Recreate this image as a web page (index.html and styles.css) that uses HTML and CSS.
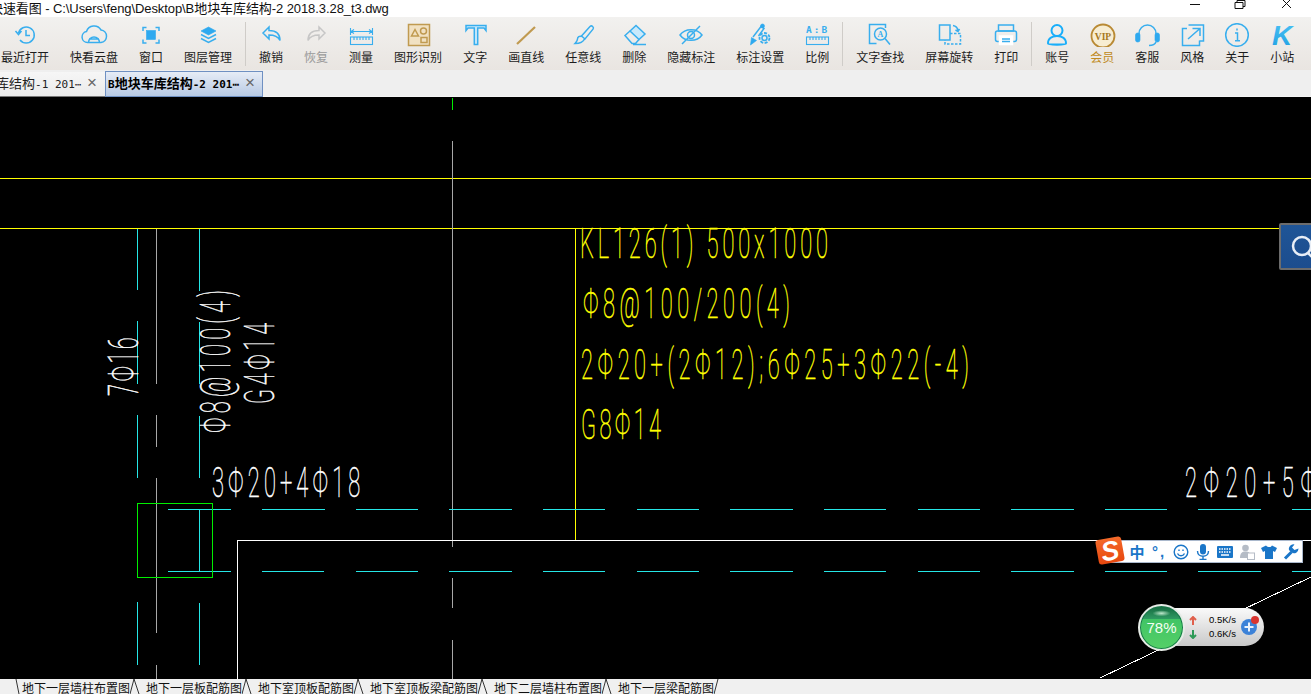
FILE: index.html
```html
<!DOCTYPE html>
<html lang="zh">
<head>
<meta charset="utf-8">
<title>快速看图</title>
<link rel="stylesheet" href="styles.css">
</head>
<body>
<div class="app">
  <header class="titlebar">
    <span class="title-text">快速看图 - C:\Users\feng\Desktop\B地块车库结构-2 2018.3.28_t3.dwg</span>
    <svg class="winctl" viewBox="0 0 110 17"><path d="M0 4.500H10M45 2.500H53V8.500H45ZM47 2.500V.5H55V6.500H53M92-1L101 8M101-1L92 8"/></svg>
  </header>

  <nav class="toolbar">
    <div class="tool"><svg viewBox="0 0 30 24" class="ic"><path d="M8.500 10a8 8 0 1 1 1.500 7M5.500 8l3 3.500 3-3.500M16 7v5.500h4"/></svg><span>最近打开</span></div>
    <div class="tool"><svg viewBox="0 0 30 24" class="ic"><path d="M9 19.500H8.500a5.500 5.500 0 0 1-1-10.900A8 8 0 0 1 22 7a6.300 6.300 0 0 1 0 12.500h-1M9.500 19.500a5.500 5.500 0 0 1 11 0zM10 16h10"/></svg><span>快看云盘</span></div>
    <div class="tool"><svg viewBox="0 0 30 24" class="ic"><path d="M7 8V4.500h3.500M19.500 4.500H23V8M23 16.500V20h-3.500M10.500 20H7v-3.500"/><rect class="solid" x="10.500" y="7.500" width="9" height="9"/></svg><span>窗口</span></div>
    <div class="tool"><svg viewBox="0 0 30 24" class="ic"><path class="solid" d="M15.500 4l7.500 4-7.500 4L8 8z"/><path d="M8 11.500l7.500 4 7.500-4M8 15.500l7.500 4 7.500-4"/></svg><span>图层管理</span></div>
    <i class="sep"></i>
    <div class="tool"><svg viewBox="0 0 30 24" class="ic"><path d="M7 10l6-6v3.500c7 0 11 3 11 10-2-4-5-5.500-11-5.500V16z"/></svg><span>撤销</span></div>
    <div class="tool off"><svg viewBox="0 0 30 24" class="ic gray"><path d="M24 10l-6-6v3.500c-7 0-11 3-11 10 2-4 5-5.500 11-5.500V16z"/></svg><span>恢复</span></div>
    <div class="tool"><svg viewBox="0 0 30 24" class="ic thin"><path d="M4.500 5v7M26.500 5v7M5 8.500h21M8 6.500l-3 2 3 2M23 6.500l3 2-3 2"/><rect x="4.500" y="14" width="22" height="7.500"/><path d="M8 14v3M11 14v3M14 14v3M17 14v3M20 14v3M23 14v3"/></svg><span>测量</span></div>
    <div class="tool"><svg viewBox="0 0 30 24" class="ic tan"><rect class="tanbg" x="5.500" y="1.500" width="21" height="21"/><path d="M12 6.500l3.500 6.500h-7zM18 14.500h6v5h-6z"/><circle cx="20.500" cy="8" r="3"/></svg><span>图形识别</span></div>
    <div class="tool"><svg viewBox="0 0 30 24" class="ic"><path class="pale" d="M6 2.500h20v5l-2-2.500h-6.300v16.500h-3.400V5H8L6 7.500z"/></svg><span>文字</span></div>
    <div class="tool"><svg viewBox="0 0 30 24" class="ic tan wide"><path d="M6 21L24 4"/></svg><span>画直线</span></div>
    <div class="tool"><svg viewBox="0 0 30 24" class="ic"><path d="M13.500 13L22 3.500a2 2 0 0 1 3 2.600L17 16zM13.500 13.500c-2-1-4 .5-4 2.500 0 1.500-1 3-2.500 4.500 3 0 8-1 9.500-4.500"/></svg><span>任意线</span></div>
    <div class="tool"><svg viewBox="0 0 30 24" class="ic"><path class="pale" d="M11 8l6-5.500 9 8.500-6 5.500z"/><path d="M11 8L6 12.500l7 8h3.500l3.500-4M14 21.500h13"/></svg><span>删除</span></div>
    <div class="tool"><svg viewBox="0 0 30 24" class="ic"><path d="M4 12c5-7 17-7 22 0-5 7-17 7-22 0zM24 3L6 21"/><circle cx="15" cy="12" r="3.500"/></svg><span>隐藏标注</span></div>
    <div class="tool"><svg viewBox="0 0 30 24" class="ic"><path d="M8 14L16 3.500l3 2L13.500 13"/><path class="solid" d="M5.500 22l1-7.500 5 3z"/><circle class="solid" cx="17.500" cy="3" r="2"/><circle cx="19.500" cy="15" r="2.500"/><circle class="dash" cx="19.500" cy="15" r="5"/></svg><span>标注设置</span></div>
    <div class="tool"><svg viewBox="0 0 30 24" class="ic thin"><text class="ab" x="4" y="10">A:B</text><rect x="4.500" y="14" width="22" height="7.500"/><path d="M8 14v3M11 14v3M14 14v3M17 14v3M20 14v3M23 14v3"/></svg><span>比例</span></div>
    <i class="sep"></i>
    <div class="tool"><svg viewBox="0 0 30 24" class="ic"><path d="M20.500 5V1.500h-16v19h7"/><circle cx="15.500" cy="11" r="6"/><path d="M20 15.500l5 6"/><text class="finda" x="12.500" y="14">A</text></svg><span>文字查找</span></div>
    <div class="tool"><svg viewBox="0 0 30 24" class="ic"><rect x="5.500" y="2" width="10.500" height="15"/><path class="dashline" d="M16 10.500h10.500v10.500H11v-4"/><path d="M19 2.500c3 .5 4.500 2 5 5M21.500 7l2.500 1.500 1.500-2.500"/></svg><span>屏幕旋转</span></div>
    <div class="tool"><svg viewBox="0 0 30 24" class="ic"><rect x="7.500" y="2" width="15" height="6"/><rect x="4.500" y="8" width="21" height="10.500" rx="2"/><rect class="white" x="8.500" y="13" width="13" height="8.500"/><path d="M11 16h8M11 18.500h8"/></svg><span>打印</span></div>
    <i class="sep"></i>
    <div class="tool"><svg viewBox="0 0 30 24" class="ic bold"><circle cx="15" cy="7.500" r="5.500"/><path d="M6 20.500c0-5 4-7.500 9-7.500s9 2.500 9 7.500c0 1.500-18 1.500-18 0z"/></svg><span>账号</span></div>
    <div class="tool vip"><svg viewBox="0 0 30 24" class="ic gold"><circle cx="16" cy="13" r="11.500"/><text class="viptext" x="16" y="16.500">VIP</text></svg><span>会员</span></div>
    <div class="tool"><svg viewBox="0 0 30 24" class="ic"><path d="M7 13v-2.500a8.500 8.500 0 0 1 17 0V13M24 19c-1 2.500-4 3.500-7 3.500"/><rect class="solid" x="3.500" y="10" width="4.500" height="9" rx="2"/><rect class="solid" x="23" y="10" width="4.500" height="9" rx="2"/></svg><span>客服</span></div>
    <div class="tool"><svg viewBox="0 0 30 24" class="ic"><path d="M10 5.500H5.500v17h17v-5M11.500 2h15v16h-4"/><path d="M11 16L23 5.500M15.500 5.500H23V13"/></svg><span>风格</span></div>
    <div class="tool"><svg viewBox="0 0 30 24" class="ic"><circle cx="15" cy="12" r="11.300"/><path d="M13 10h2.500v7.500M13 17.800h5M15 5.500v2"/></svg><span>关于</span></div>
    <div class="tool"><svg viewBox="0 0 30 24" class="k"><defs><linearGradient id="kg" x1="0" y1="0" x2="0" y2="1"><stop offset="0" stop-color="#4cc3f5"/><stop offset="1" stop-color="#1f9fe2"/></linearGradient></defs><text x="5" y="22" class="ktext" fill="url(#kg)">K</text></svg><span>小站</span></div>
  </nav>

  <div class="tabs">
    <div class="tab"><span class="tab-text clip">库结构<span class="m">-1 201⋯</span></span><b class="x">×</b></div>
    <div class="tab active"><span class="tab-text"><span class="m">B</span>地块车库结构<span class="m">-2 201⋯</span></span><b class="x">×</b></div>
  </div>

  <main class="canvas">
    <svg class="cad" viewBox="0 97 1311 582">
      <path class="ln yellow" d="M0 178.500H1311M0 228.500H1280M575.500 228V540"/>
      <path class="ln green" d="M452.500 98V110"/>
      <path class="ln gray" d="M452.500 141V547M452.500 578V608M452.500 640V679M156.500 229V384M156.500 415V447M156.500 478V633M156.500 665V679"/>
      <path class="ln cyan" d="M137.500 229V290M137.500 321V384M137.500 415V478M137.500 602V665M199.500 229V291M199.500 322V384M199.500 416V478M199.500 509V571M199.500 603V665"/>
      <path class="ln cyan" d="M168 509.500H231M262 509.500H325M356 509.500H418M449 509.500H512M543 509.500H605M637 509.500H699M730 509.500H793M824 509.500H886M918 509.500H980M1011 509.500H1074M1105 509.500H1167M1198 509.500H1261M1292 509.500H1311"/>
      <path class="ln cyan" d="M168 571.500H231M262 571.500H324M356 571.500H418M449 571.500H512M543 571.500H605M637 571.500H699M730 571.500H793M824 571.500H886M918 571.500H980M1011 571.500H1074M1105 571.500H1167M1198 571.500H1261M1292 571.500H1311"/>
      <path class="ln white" d="M237.500 679V540.500H1311"/>
      <path class="ln green" d="M137.500 503.500H212.500V577.500H137.500Z"/>
      <path class="ln white" d="M1311 577L1100 678"/>

      <g class="cadtext ytext">
        <text transform="translate(580 258) scale(.52 1)" textLength="477">KL126(1) 500x1000</text>
        <text transform="translate(583 318) scale(.52 1)" textLength="398">Φ8@100/200(4)</text>
        <text transform="translate(581 379) scale(.52 1)" textLength="746">2Φ20+(2Φ12);6Φ25+3Φ22(-4)</text>
        <text transform="translate(581 439) scale(.52 1)" textLength="154">G8Φ14</text>
      </g>
      <g class="cadtext wtext">
        <text transform="translate(212 497) scale(.52 1)" textLength="285">3Φ20+4Φ18</text>
        <text transform="translate(1185 497) scale(.52 1)" textLength="252">2Φ20+5Φ</text>
        <text transform="translate(138 396) rotate(-90) scale(.52 1)" textLength="113">7Φ16</text>
        <text transform="translate(230 433) rotate(-90) scale(.52 1)" textLength="275">Φ8@100(4)</text>
        <text transform="translate(274 404) rotate(-90) scale(.52 1)" textLength="156">G4Φ14</text>
      </g>
    </svg>

    <div class="search"><svg viewBox="0 0 32 46"><circle cx="21" cy="23" r="9"/><path d="M27 30l6 6"/></svg></div>

    <div class="ime">
      <div class="ime-logo"><span>S</span></div>
      <span class="ime-slot zh">中</span>
      <span class="ime-slot punct">°,</span>
      <span class="ime-slot"><svg viewBox="0 0 16 16" class="ime-ic"><circle cx="8" cy="8" r="6.800"/><path d="M4.500 9.500c1.500 3 5.500 3 7 0M6 5.500v1.500M10 5.500v1.500"/></svg></span>
      <span class="ime-slot"><svg viewBox="0 0 16 16" class="ime-ic"><rect class="fillb" x="5" y="0" width="6" height="10.500" rx="3"/><path d="M2.500 7c0 7 11 7 11 0M8 13v2.500M4.500 15.500h7"/></svg></span>
      <span class="ime-slot"><svg viewBox="0 0 16 16" class="ime-ic"><rect class="fillb" x="0" y="2" width="16" height="12" rx="1"/><path class="keys" d="M2 5h12M2 8h12"/><path class="keyb" d="M4 11h8"/></svg></span>
      <span class="ime-slot"><svg viewBox="0 0 16 16" class="ime-ic"><circle class="fillg" cx="6.500" cy="4" r="3.300"/><path class="fillg" d="M1 14c0-5 2-6.500 5.500-6.500S12 9 12 14z"/><rect class="boxg" x="8.500" y="9" width="7" height="6.500"/></svg></span>
      <span class="ime-slot"><svg viewBox="0 0 16 16" class="ime-ic"><path class="fillb" d="M5 1.500L0 4l2 4 2-1v8h8V7l2 1 2-4-5-2.500c-1 2-4 2-6 0z"/></svg></span>
      <span class="ime-slot"><svg viewBox="0 0 16 16" class="ime-ic"><path class="wrench" d="M2 14.500L8.500 8"/><path class="fillb" d="M15.500 4.500a4.500 4.500 0 0 1-7 4L6 6a4.500 4.500 0 0 1 5.500-5.500L9 3.500 11.500 6z"/></svg></span>
    </div>

    <div class="net">
      <div class="ball"><span>78%</span></div>
      <div class="pill">
        <div class="speeds">
          <div class="row"><svg viewBox="0 0 8 9" class="arr up"><path d="M4 9V1M1 4l3-3 3 3"/></svg><span>0.5K/s</span></div>
          <div class="row"><svg viewBox="0 0 8 9" class="arr down"><path d="M4 0v8M1 5l3 3 3-3"/></svg><span>0.6K/s</span></div>
        </div>
        <div class="plus"><svg viewBox="0 0 16 16"><path d="M8 3.500v9M3.500 8h9"/></svg><i class="dot"></i></div>
      </div>
    </div>
  </main>

  <footer class="sheets">
    <svg class="skew" viewBox="0 0 14 15"><path d="M10 0L13 15"/></svg><span class="first">地下一层墙柱布置图</span>
    <svg class="skew" viewBox="0 0 14 15"><path d="M4 0L0 15M4 0L9 15"/></svg><span>地下一层板配筋图</span>
    <svg class="skew" viewBox="0 0 14 15"><path d="M4 0L0 15M4 0L9 15"/></svg><span>地下室顶板配筋图</span>
    <svg class="skew" viewBox="0 0 14 15"><path d="M4 0L0 15M4 0L9 15"/></svg><span>地下室顶板梁配筋图</span>
    <svg class="skew" viewBox="0 0 14 15"><path d="M4 0L0 15M4 0L9 15"/></svg><span>地下二层墙柱布置图</span>
    <svg class="skew" viewBox="0 0 14 15"><path d="M4 0L0 15M4 0L9 15"/></svg><span>地下一层梁配筋图</span>
    <svg class="skew" viewBox="0 0 14 15"><path d="M4 0L0 15"/></svg>
  </footer>
</div>
</body>
</html>
```
FILE: styles.css
```css
* { box-sizing: border-box; }
html, body { margin: 0; height: 100%; overflow: hidden; background: #000; }
body { font-family: "Noto Sans", "Noto Sans CJK SC", sans-serif; color: #111; }
.app { width: 1311px; height: 694px; display: flex; flex-direction: column; overflow: hidden; }

.titlebar { height: 17px; background: #fff; display: flex; align-items: center; overflow: hidden; flex: none; }
.title-text { margin-left: -10px; font: 13px/17px "Liberation Sans", "Noto Sans CJK SC", sans-serif; letter-spacing: -.08px; white-space: pre; }
.winctl { margin-left: auto; margin-right: 11px; width: 110px; height: 17px; flex: none; }
.winctl path { fill: none; stroke: #111; stroke-width: 1; }

.toolbar { height: 53px; flex: none; display: flex; background: linear-gradient(#f2f1ef, #e9e5e1); padding-top: 6px; }
.tool { padding: 0 11px 0 10px; display: flex; flex-direction: column; align-items: center; font: 12px/14px "Noto Sans CJK SC", sans-serif; color: #1c1c1c; white-space: nowrap; }
.tool:first-child { padding-left: 1px; }
.tool span { margin-top: 3px; }
.tool svg { width: 30px; height: 24px; margin: 0 -10px; flex: none; }
.tool.off { color: #9a9a9a; }
.tool.vip { color: #c08a22; }
.sep { width: 1px; height: 44px; margin: -1px 3px 0 2px; background: #cfccc8; flex: none; }

.ic { fill: none; stroke: #38aeee; stroke-width: 1.5; }
.ic.thin { stroke-width: 1.1; }
.ic.bold { stroke: #18aefa; stroke-width: 2; }
.ic.gray { stroke: #c6c6c6; }
.ic.tan { stroke: #c09a50; }
.ic.wide { stroke-width: 2.2; }
.ic.gold { stroke: #b98a34; stroke-width: 1.8; }
.ic .solid { fill: #2ea9ef; stroke: #2ea9ef; stroke-width: .6; }
.ic .pale { fill: #c8e9fb; }
.ic .white { fill: #fff; }
.ic .tanbg { fill: #f1e1c2; }
.ic .dash { stroke-dasharray: 3 1.5; stroke-width: 1.8; }
.ic .dashline { stroke-dasharray: 2.5 1.5; }
.gold circle { fill: #f7edd2; }
.ab { font: 700 9.500px "DejaVu Sans Mono", monospace; fill: #38aeee; stroke: none; letter-spacing: 2px; }
.finda { font: 700 8px "Liberation Serif", serif; fill: #38aeee; stroke: none; }
.viptext { font: 700 9.500px "Liberation Serif", serif; fill: #a5781c; stroke: none; text-anchor: middle; }
.ktext { font: italic 700 28px/24px "Liberation Sans", sans-serif; }

.tabs { height: 27px; flex: none; display: flex; align-items: flex-end; background: #efefef; border-bottom: 1px solid #f4f4f4; }
.tab { width: 105px; height: 25px; margin-bottom: -1px; display: flex; align-items: center; position: relative; overflow: hidden; background: linear-gradient(#f6f6f6, #ebebeb); border-bottom: 1px solid #777; font: 13px/22px "Noto Sans CJK SC", sans-serif; white-space: pre; color: #222; }
.tab-text { margin-left: 0; }
.tab-text.clip { margin-left: -4px; }
.m { font-family: "DejaVu Sans Mono", monospace; font-size: 11px; }
.x { position: absolute; right: 8px; top: 0; font: 400 17px/22px "Liberation Sans", sans-serif; color: #666; }
.tab.active { width: 158px; height: 26px; border: 1px solid #6f90c2; background: linear-gradient(#e6ecf6, #b8cae4); font-weight: 700; color: #000; }
.tab.active .tab-text { margin-left: 2px; }
.tab.active .x { right: 7px; top: 0; }

.canvas { flex: none; height: 582px; position: relative; background: #000; overflow: hidden; }
.cad { display: block; width: 1311px; height: 582px; }
.ln { fill: none; stroke-width: 1; shape-rendering: crispEdges; }
.yellow { stroke: #ff0; }
.green { stroke: #0e0; }
.gray { stroke: #a8a8a8; }
.cyan { stroke: #25e6e6; }
.white { stroke: #fff; }
.cadtext { font: 100 42px "Roboto", sans-serif; }
.cadtext text { stroke-width: .45px; vector-effect: non-scaling-stroke; }
.ytext { fill: #ff0; stroke: #ff0; }
.wtext { fill: #fff; stroke: #fff; }

.search { position: absolute; left: 1279px; top: 126px; width: 40px; height: 47px; border: 2px solid #6c6c6c; border-radius: 2px; background: linear-gradient(#1f5597, #1c4d8e); overflow: hidden; }
.search svg { display: block; width: 32px; height: 46px; margin: -2px 0 0 0; overflow: visible; }
.search circle, .search path { fill: none; stroke: #e8eef6; stroke-width: 2.5; }

.ime { position: absolute; left: 1110px; top: 443px; width: 193px; height: 23px; background: #fff; border: 1px solid #aab8cc; border-left: 0; padding-left: 16px; display: flex; align-items: center; }
.ime-slot { width: 22px; height: 21px; display: flex; align-items: center; justify-content: center; flex: none; color: #1a76c8; }
.zh { font: 700 15px "Noto Sans CJK SC", sans-serif; }
.punct { font: 700 15px/12px "Liberation Sans", sans-serif; letter-spacing: 2px; }
.ime-ic { width: 16px; height: 16px; fill: none; stroke: #1a76c8; stroke-width: 1.400; }
.fillb { fill: #1a76c8; stroke: none; }
.fillg { fill: #b5bcc6; stroke: none; }
.boxg { fill: #fff; stroke: #b5bcc6; stroke-width: 1; }
.keys { stroke: #fff; stroke-width: 1.500; stroke-dasharray: 1.500 1; }
.keyb { stroke: #fff; stroke-width: 1.500; }
.wrench { stroke-width: 3; }
.ime-logo { position: absolute; left: -13px; top: -3px; width: 26px; height: 25px; background: linear-gradient(#f46a2a, #e8480f); border-radius: 3px; transform: rotate(-10deg); display: flex; align-items: center; justify-content: center; }
.ime-logo span { font: italic 700 27px/24px "Liberation Sans", sans-serif; color: #fff; }

.net { position: absolute; left: 1138px; top: 506px; display: flex; align-items: center; width: 127px; height: 48px; }
.ball { position: relative; z-index: 1; width: 47px; height: 47px; border-radius: 50%; border: 2px solid #e6ebe6; background: radial-gradient(ellipse 9px 3px at 50% 17%, #bfe8cc, transparent), linear-gradient(#15683f 0, #2f9a62 30%, #41c465 31%, #55d067 100%); box-shadow: inset 0 0 0 1px #18784a; display: flex; align-items: center; justify-content: center; flex: none; }
.ball span { font: 15px "Liberation Sans", sans-serif; color: #f4fff4; }
.pill { margin-left: -24px; width: 103px; height: 38px; border-radius: 0 19px 19px 0; background: linear-gradient(#fafafa, #c9c9c9); padding-left: 27px; display: flex; align-items: center; flex: none; }
.speeds { width: 48px; display: flex; flex-direction: column; gap: 2px; }
.row { display: flex; justify-content: space-between; align-items: center; height: 12px; font: 9.500px/12px "Liberation Sans", sans-serif; color: #000; }
.arr { width: 8px; height: 9px; fill: none; stroke-width: 2; margin-left: 1px; }
.up { stroke: #e0604c; }
.down { stroke: #2d9a57; }
.plus { position: relative; width: 16px; height: 16px; margin-left: 5px; border-radius: 50%; background: #3c82d8; }
.plus svg { display: block; width: 16px; height: 16px; fill: none; stroke: #eaf2fc; stroke-width: 2; }
.dot { position: absolute; right: -2px; top: -3px; width: 8px; height: 8px; border-radius: 50%; background: #d8342f; }

.sheets { height: 15px; flex: none; display: flex; background: #f0f0f0; padding-left: 6px; font: 12px/14px "Noto Sans CJK SC", sans-serif; color: #111; white-space: nowrap; overflow: hidden; }
.sheets span { padding-top: 2px; }
.skew { width: 14px; height: 15px; margin-right: 2px; flex: none; fill: none; stroke: #333; stroke-width: 1; }
```
